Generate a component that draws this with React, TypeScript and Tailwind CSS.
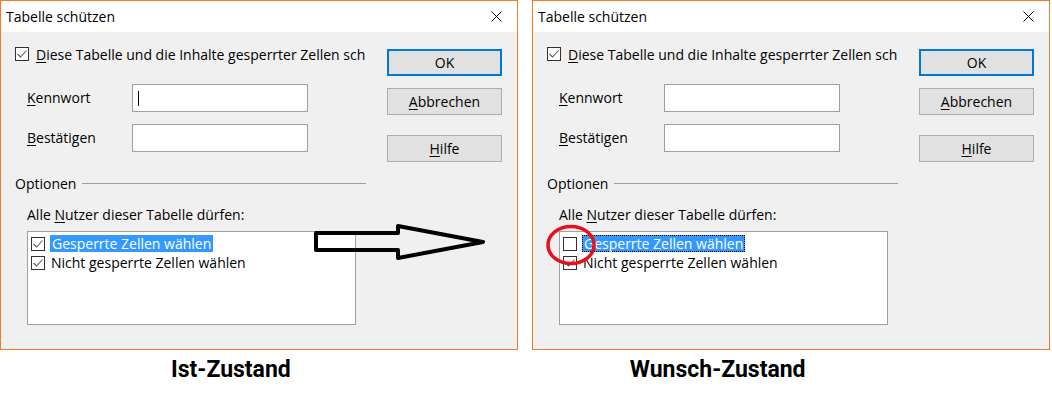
import React from "react";

type Variant = "ist" | "wunsch";

function CheckBox({ checked, className = "" }: { checked: boolean; className?: string }) {
    return (
        <span
            className={`box-border flex h-[14px] w-[14px] shrink-0 items-center justify-center border border-[#333333] bg-white ${className}`}
        >
            {checked && (
                <svg width="12" height="12" viewBox="0 0 12 12">
                    <polyline points="1.5,6 4.5,9 10.5,2.5" fill="none" stroke="#5a5a5a" strokeWidth="1.1" />
                </svg>
            )}
        </span>
    );
}

function Button({ children, primary }: { children: React.ReactNode; primary?: boolean }) {
    return (
        <div
            className={`box-border flex h-[27px] w-[115px] items-center justify-center bg-[#e1e1e1] text-[14px] text-black ${
                primary ? "border-2 border-[#0078d7]" : "border border-[#adadad]"
            }`}
        >
            {children}
        </div>
    );
}

function Dialog({ variant }: { variant: Variant }) {
    const wunsch = variant === "wunsch";
    return (
        <div className="box-border flex h-[350px] w-[518px] flex-col border border-[#f07a2e] bg-[#f0f0f0] font-['Open_Sans',sans-serif] text-[14px] text-black">
            {/* title bar */}
            <div className="flex h-[31px] shrink-0 items-center justify-between bg-white pl-[5px] pr-[15px]">
                <span className="text-[14px]">Tabelle schützen</span>
                <svg width="11" height="11" viewBox="0 0 11 11">
                    <path d="M0.5 0.5 L10.5 10.5 M10.5 0.5 L0.5 10.5" stroke="#000" strokeWidth="1" />
                </svg>
            </div>

            <div className="flex">
                {/* left column */}
                <div className="flex w-[371px] flex-col pl-[14px]">
                    <div className="mt-[12px] flex h-[20px] items-center gap-[7px]">
                        <CheckBox checked />
                        <span className="whitespace-nowrap">
                            <span className="underline underline-offset-2">D</span>iese Tabelle und die Inhalte gesperrter Zellen sch
                        </span>
                    </div>

                    <div className="mt-[20px] flex items-center pl-[12px]">
                        <span className="-mt-[2px] w-[105px]">
                            <span className="underline underline-offset-2">K</span>ennwort
                        </span>
                        <div className="box-border flex h-[28px] w-[176px] items-center border border-[#a0a0a0] bg-white pl-[5px]">
                            {!wunsch && <span className="h-[15px] w-px bg-black" />}
                        </div>
                    </div>

                    <div className="mt-[12px] flex items-center pl-[12px]">
                        <span className="-mt-[2px] w-[105px]">
                            <span className="underline underline-offset-2">B</span>estätigen
                        </span>
                        <div className="box-border h-[28px] w-[176px] border border-[#a0a0a0] bg-white" />
                    </div>

                    <div className="mt-[21px] mr-[6px] flex h-[20px] items-center gap-[6px]">
                        <span>Optionen</span>
                        <span className="h-px flex-1 bg-[#a0a0a0]" />
                    </div>

                    <div className="mt-[12px] h-[20px] pl-[12px] leading-[20px]">
                        Alle <span className="underline underline-offset-2">N</span>utzer dieser Tabelle dürfen:
                    </div>

                    <div className="ml-[12px] mt-[6px] box-border flex h-[94px] w-[329px] flex-col border border-[#a0a0a0] bg-white pl-[3px] pt-[2px]">
                        <div className="flex h-[19px] items-center gap-[5px]">
                            <CheckBox checked={!wunsch} />
                            <span
                                className={`box-border h-[17px] bg-[#3399ff] px-[1px] leading-[15px] text-white ${
                                    wunsch ? "border border-dotted border-black" : "border border-transparent"
                                }`}
                            >
                                Gesperrte Zellen wählen
                            </span>
                        </div>
                        <div className="flex h-[19px] items-center gap-[6px]">
                            <CheckBox checked />
                            <span>Nicht gesperrte Zellen wählen</span>
                        </div>
                    </div>
                </div>

                {/* buttons */}
                <div className="ml-[15px] flex flex-col pt-[17px]">
                    <Button primary>OK</Button>
                    <div className="mt-[12px]">
                        <Button>
                            <span>
                                <span className="underline underline-offset-2">A</span>bbrechen
                            </span>
                        </Button>
                    </div>
                    <div className="mt-[20px]">
                        <Button>
                            <span>
                                <span className="underline underline-offset-2">H</span>ilfe
                            </span>
                        </Button>
                    </div>
                </div>
            </div>
        </div>
    );
}

export default function App() {
    return (
        <div className="relative h-[398px] w-[1052px] overflow-hidden bg-white">
            <div className="flex gap-[14px]">
                <Dialog variant="ist" />
                <Dialog variant="wunsch" />
            </div>

            <div className="mt-[3px] flex font-['Roboto',sans-serif] text-[23px] font-bold text-black">
                <span className="ml-[171px]">Ist-Zustand</span>
                <span className="ml-[339px]">Wunsch-Zustand</span>
            </div>

            {/* arrow between the dialogs */}
            <svg className="absolute left-[312px] top-[222px]" width="176" height="40" viewBox="0 0 176 40">
                <polygon
                    points="4,11 86,11 86,4 171,20 86,36 86,28 4,28"
                    fill="none"
                    stroke="#000"
                    strokeWidth="4"
                    strokeLinejoin="round"
                />
            </svg>

            {/* red marker around the checkbox */}
            <svg className="absolute left-[545px] top-[222px]" width="54" height="46" viewBox="0 0 54 46">
                <ellipse cx="26" cy="23" rx="23" ry="18.5" fill="none" stroke="#e8101a" strokeWidth="3.5" />
            </svg>
        </div>
    );
}
